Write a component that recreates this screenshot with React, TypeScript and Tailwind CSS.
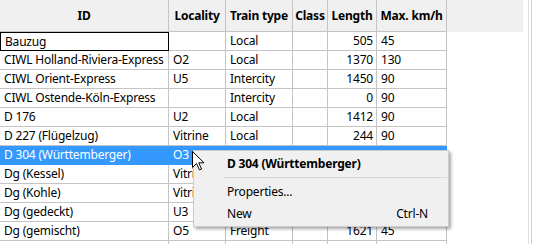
import React from 'react';

const cols = [
  { label: 'ID', w: 'w-[169px]', align: 'text-left' },
  { label: 'Locality', w: 'w-[57px]', align: 'text-left' },
  { label: 'Train type', w: 'w-[67px]', align: 'text-left' },
  { label: 'Class', w: 'w-[35px]', align: 'text-left' },
  { label: 'Length', w: 'w-[49px]', align: 'text-right' },
  { label: 'Max. km/h', w: 'w-[70px]', align: 'text-left' },
];

// cells hidden under the context menu are left blank
const rows = [
  ['Bauzug', '', 'Local', '', '505', '45'],
  ['CIWL Holland-Riviera-Express', 'O2', 'Local', '', '1370', '130'],
  ['CIWL Orient-Express', 'U5', 'Intercity', '', '1450', '90'],
  ['CIWL Ostende-Köln-Express', '', 'Intercity', '', '0', '90'],
  ['D 176', 'U2', 'Local', '', '1412', '90'],
  ['D 227 (Flügelzug)', 'Vitrine', 'Local', '', '244', '90'],
  ['D 304 (Württemberger)', 'O3', '', '', '', ''],
  ['Dg (Kessel)', 'Vitrine', '', '', '', ''],
  ['Dg (Kohle)', 'Vitrine', '', '', '', ''],
  ['Dg (gedeckt)', 'U3', '', '', '', ''],
  ['Dg (gemischt)', 'O5', 'Freight', '', '1621', '45'],
  ['', '', '', '', '', ''],
];

function Cursor() {
  return (
    <svg width="13" height="20" viewBox="0 0 13 20" className="absolute left-[192px] top-[151px]">
      <path
        d="M0.5 0.5 L0.5 16.5 L4.5 12.5 L7.5 19 L9.5 18 L6.8 11.8 L12 11.8 Z"
        fill="#fff"
        stroke="#000"
        strokeWidth="1"
      />
    </svg>
  );
}

export default function App() {
  return (
    <div
      className="relative w-[535px] h-[244px] overflow-hidden bg-white text-[12px] tracking-[-0.2px] text-black"
      style={{ fontFamily: '"Noto Sans", "Open Sans", sans-serif' }}
    >
      <div className="flex h-full">
        <div className="w-[523px] flex flex-col">
          {/* Header */}
          <div className="flex h-[32px] shrink-0 bg-[#f0f0f0]">
            <div className="flex w-[447px] border-b border-[#c4c4c4]">
              {cols.map((c) => (
                <div
                  key={c.label}
                  className={`${c.w} flex items-center justify-center font-bold border-r border-[#c4c4c4] shrink-0`}
                >
                  {c.label}
                </div>
              ))}
            </div>
          </div>

          {/* Body */}
          <div className="flex flex-col">
            {rows.map((r, i) => {
              const selected = i === 6;
              return (
                <div
                  key={i}
                  className={`flex h-[19px] shrink-0 w-[447px] ${selected ? 'bg-[#3399ff] text-white' : ''}`}
                >
                  {r.map((v, j) => (
                    <div
                      key={j}
                      className={`${cols[j].w} ${cols[j].align} shrink-0 leading-[18px] pl-[4px] pr-[3px] border-r border-b whitespace-nowrap overflow-hidden ${
                        i === 0 && j === 0 ? 'border border-black' : ''
                      } ${selected ? 'border-[#3399ff]' : 'border-[#c4c4c4]'}`}
                    >
                      {v}
                    </div>
                  ))}
                </div>
              );
            })}
          </div>
        </div>
        <div className="flex-1 flex justify-start pl-[5px]">
          <div className="w-[1px] h-full bg-[#e0e0e0]" />
          <div className="w-[2px]" />
          <div className="w-[1px] h-full bg-[#d0d0d0]" />
        </div>
      </div>

      {/* Context menu */}
      <div className="absolute left-[193px] top-[150px] w-[256px] h-[77px] bg-[#f0f0f0] border border-[#ccc] shadow-[2px_2px_3px_rgba(0,0,0,0.35)] flex flex-col">
        <div className="h-[26px] flex items-center pl-[33px] font-bold">D 304 (Württemberger)</div>
        <div className="ml-[29px] mr-[1px] h-[1px] bg-[#d7d7d7]" />
        <div className="h-[22px] mt-[3px] flex items-center pl-[33px]">Properties...</div>
        <div className="h-[22px] flex items-center justify-between pl-[33px] pr-[20px]">
          <span>New</span>
          <span>Ctrl-N</span>
        </div>
      </div>

      <Cursor />
    </div>
  );
}
